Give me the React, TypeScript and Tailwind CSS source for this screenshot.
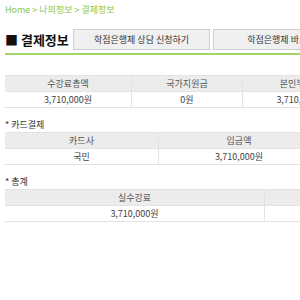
const font = { fontFamily: '"Noto Sans CJK KR", "Noto Sans", sans-serif' };

function Cell({ children, head, className = '' }: { children?: React.ReactNode; head?: boolean; className?: string }) {
  return (
    <div
      className={`h-[16px] flex items-center justify-center whitespace-nowrap text-[9px] leading-none border-b border-[#e3e3e3] ${
        head ? 'bg-[#ececec] text-[#555]' : 'bg-white text-[#444]'
      } ${className}`}
    >
      {children}
    </div>
  );
}

export default function App() {
  return (
    <div className="w-[300px] h-[300px] overflow-hidden bg-white" style={font}>
      <div className="w-[420px] pl-[5px]">
        {/* Breadcrumb */}
        <div className="pt-[4px] h-[20px] text-[9px] text-[#8dc63f] leading-[12px] whitespace-nowrap">Home &gt; 나의정보 &gt; 결제정보</div>

        {/* Title + buttons */}
        <div className="flex items-center h-[27px] mt-[6px]">
          <div className="w-[68px] whitespace-nowrap text-[13px] font-bold text-[#111] leading-none">■ 결제정보</div>
          <button className="w-[137px] h-[21px] bg-[#f0f0f0] border border-[#cfcfcf] text-[9px] text-[#333] whitespace-nowrap">
            학점은행제 상담 신청하기
          </button>
          <button className="ml-[3px] w-[145px] h-[21px] bg-[#f0f0f0] border border-[#cfcfcf] text-[9px] text-[#333] whitespace-nowrap">
            학점은행제 바로가기
          </button>
        </div>
        <div className="h-[2px] bg-[#a5d46a]" />

        {/* Table 1 */}
        <div className="mt-[20px] grid grid-cols-[127px_111px_115px] border-t border-[#e3e3e3]">
          <Cell head className="border-r border-[#e3e3e3]">수강료총액</Cell>
          <Cell head className="border-r border-[#e3e3e3]">국가지원금</Cell>
          <Cell head>본인부담금</Cell>
          <Cell className="border-r border-[#e3e3e3]">3,710,000원</Cell>
          <Cell className="border-r border-[#e3e3e3]">0원</Cell>
          <Cell>3,710,000원</Cell>
        </div>

        {/* Card */}
        <div className="mt-[11px] text-[9px] text-[#333] leading-[12px]">* 카드결제</div>
        <div className="mt-[1px] grid grid-cols-[154px_160px] border-t border-[#e3e3e3]">
          <Cell head className="border-r border-[#e3e3e3]">카드사</Cell>
          <Cell head>입금액</Cell>
          <Cell className="border-r border-[#e3e3e3]">국민</Cell>
          <Cell>3,710,000원</Cell>
        </div>

        {/* Total */}
        <div className="mt-[11px] text-[9px] text-[#333] leading-[12px]">* 총계</div>
        <div className="mt-[1px] grid grid-cols-[260px_100px] border-t border-[#e3e3e3]">
          <Cell head className="border-r border-[#e3e3e3]">실수강료</Cell>
          <Cell head />
          <Cell className="border-r border-[#e3e3e3]">3,710,000원</Cell>
          <Cell />
        </div>
      </div>
    </div>
  );
}
